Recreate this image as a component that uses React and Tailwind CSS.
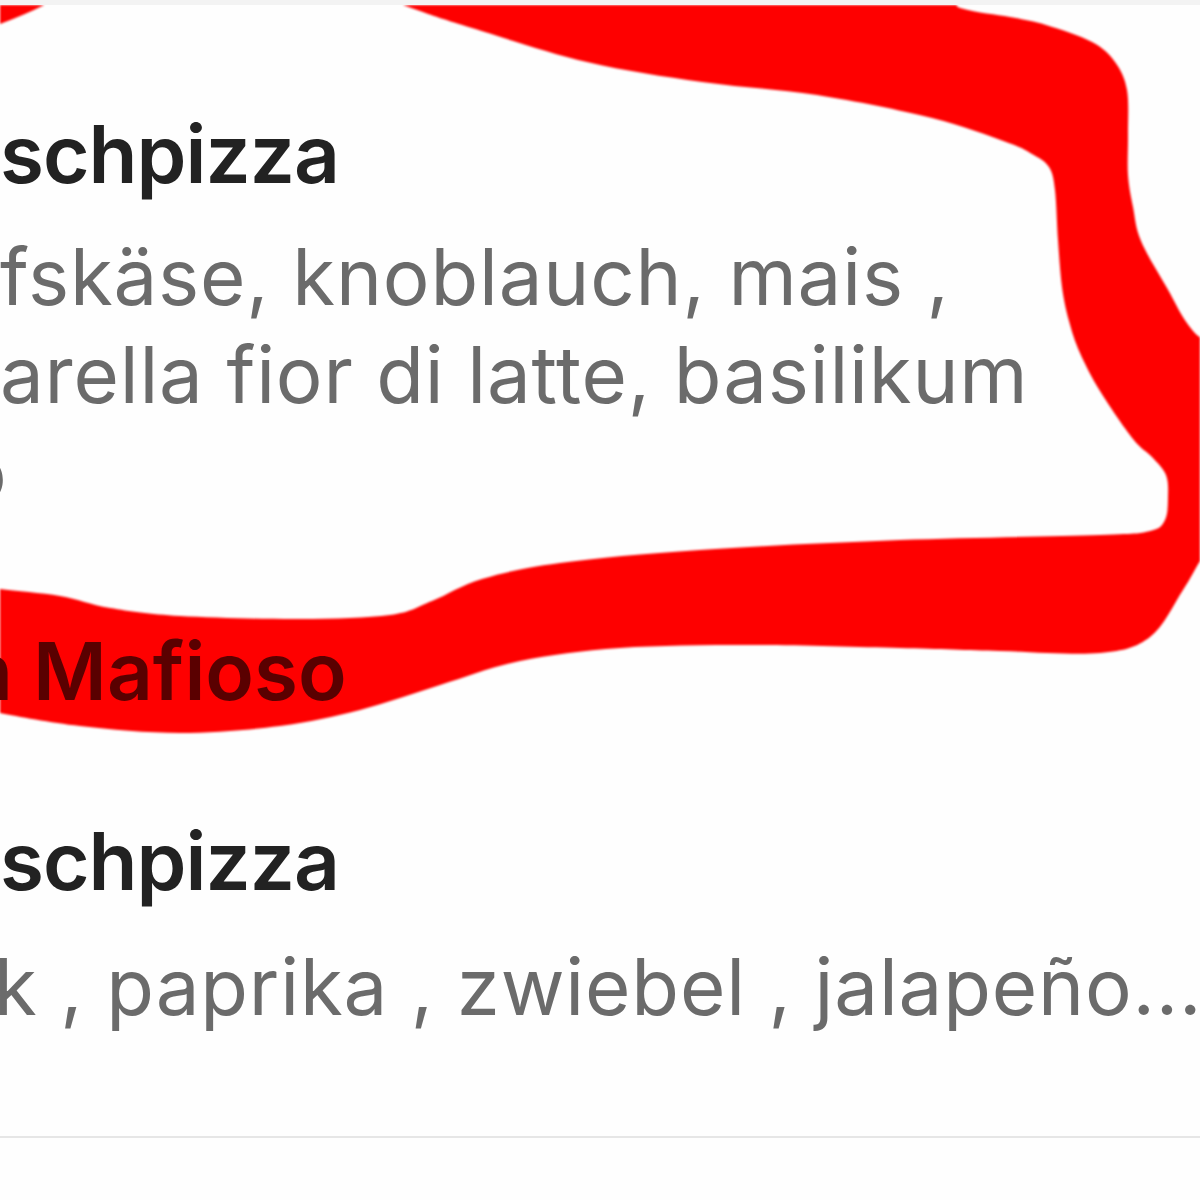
import React from 'react';

// hand-drawn marker loop, outer edge then inner edge
const loop = [
  [300, -40], [900, -20], [960, 3], [1010, 12], [1046, 20], [1092, 37], [1115, 57], [1127, 85],
  [1128, 130], [1128, 170], [1133, 202], [1141, 236], [1167, 283], [1193, 326], [1240, 370],
  [1250, 480], [1205, 548], [1183, 585], [1150, 632], [1100, 648], [1000, 646], [900, 643],
  [750, 640], [620, 643], [520, 656], [440, 680], [360, 705], [280, 721], [180, 728], [80, 721],
  [0, 708], [-30, 700],
  [-30, 580], [0, 584], [60, 591], [110, 603], [180, 611], [300, 614], [390, 610], [432, 596],
  [482, 574], [560, 558], [700, 545], [900, 535], [1100, 530], [1150, 526],
  [1165, 515], [1168, 492], [1166, 470], [1152, 452], [1133, 434], [1100, 386], [1080, 348],
  [1069, 316], [1062, 282], [1058, 235], [1055, 185], [1049, 162], [1032, 149], [1006, 137], [932, 113],
  [817, 90], [702, 77], [587, 57], [472, 23], [420, 6], [380, -10], [360, -30],
];

function smoothPath(pts) {
  const n = pts.length;
  let d = `M ${pts[0][0]} ${pts[0][1]}`;
  for (let i = 0; i < n; i++) {
    const p0 = pts[(i - 1 + n) % n];
    const p1 = pts[i];
    const p2 = pts[(i + 1) % n];
    const p3 = pts[(i + 2) % n];
    const c1 = [p1[0] + (p2[0] - p0[0]) / 6, p1[1] + (p2[1] - p0[1]) / 6];
    const c2 = [p2[0] - (p3[0] - p1[0]) / 6, p2[1] - (p3[1] - p1[1]) / 6];
    d += ` C ${c1[0]} ${c1[1]} ${c2[0]} ${c2[1]} ${p2[0]} ${p2[1]}`;
  }
  return d + ' Z';
}

function Scribble() {
  return (
    <svg
      className="absolute inset-0 z-10 pointer-events-none mix-blend-multiply blur-[1px]"
      width="1200"
      height="1200"
      viewBox="0 0 1200 1200"
    >
      <path d={smoothPath(loop)} fill="#ff0000" />
      <path d="M -10 -10 L 62 -10 Q 40 4 0 19 Z" fill="#ff0000" />
    </svg>
  );
}

function App() {
  return (
    <div className="relative w-[1200px] h-[1200px] overflow-hidden bg-[#fefefe] border-t-[5px] border-[#f3f3f3] font-['Inter','Liberation_Sans',sans-serif]">
      <Scribble />
      <div className="pt-[101px]">
        <h2 className="text-[80px] leading-[96px] font-semibold tracking-[-1px] text-[#222222] whitespace-nowrap">schpizza</h2>
        <p className="mt-[26px] text-[78px] leading-[98px] tracking-[0.8px] text-[#6b6b6b] whitespace-nowrap">
          <span className="block">fskäse, knoblauch, mais ,</span>
          <span className="block">arella fior di latte, basilikum</span>
          <span className="block -ml-[40px]">o</span>
        </p>

        <h2 className="mt-[101px] -ml-[36px] text-[80px] leading-[96px] font-semibold text-[#5a0000] whitespace-nowrap">n Mafioso</h2>

        <h2 className="mt-[94px] text-[80px] leading-[96px] font-semibold tracking-[-1px] text-[#222222] whitespace-nowrap">schpizza</h2>
        <p className="mt-[29px] -ml-[6px] text-[78px] leading-[98px] tracking-[0.8px] text-[#6b6b6b] whitespace-nowrap">
          k , paprika , zwiebel , jalapeño...
        </p>

        <div className="mt-[100px] h-[2px] bg-[#e6e6e6]" />
      </div>
    </div>
  );
}

export default App;
